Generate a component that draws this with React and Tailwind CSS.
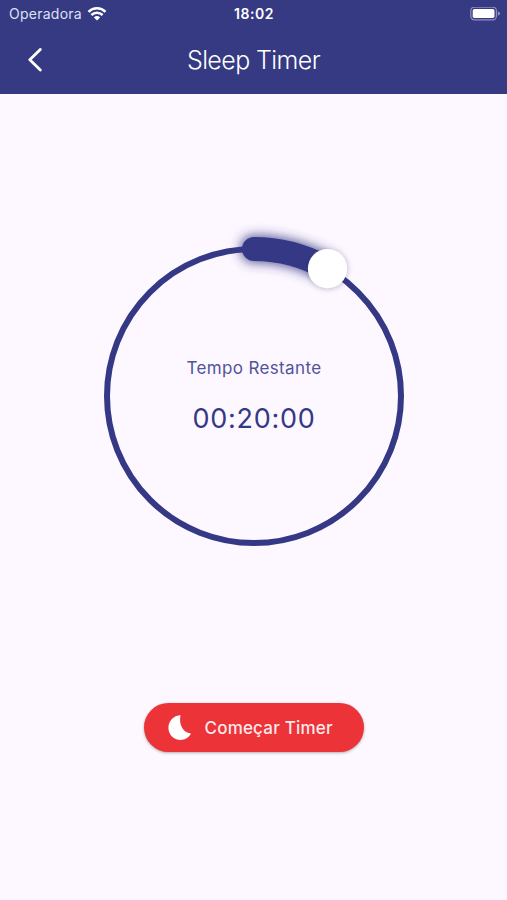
import React from "react";

const SIZE = 340;
const CENTER = SIZE / 2;
const RADIUS = 147;

function pointAt(degrees) {
  const rad = (degrees * Math.PI) / 180;
  return {
    x: CENTER + RADIUS * Math.sin(rad),
    y: CENTER - RADIUS * Math.cos(rad),
  };
}

function WifiIcon() {
  return (
    <svg width="20" height="14" viewBox="0 0 20 14" fill="none">
      <g stroke="#fff" strokeWidth="2.5">
        <path d="M1.5 4.8a12.2 12.2 0 0 1 17 0" />
        <path d="M4.4 8a8 8 0 0 1 11.2 0" />
      </g>
      <path d="M10 13.4 6.9 10.4a4.4 4.4 0 0 1 6.2 0z" fill="#fff" />
    </svg>
  );
}

function BatteryIcon() {
  return (
    <svg width="31" height="14" viewBox="0 0 31 14" fill="none">
      <rect x="0.8" y="0.2" width="25.6" height="12.6" rx="3.6" stroke="#8f90bf" strokeWidth="1.2" />
      <rect x="2.7" y="2" width="21.8" height="9" rx="1.8" fill="#fff" />
      <path d="M27.8 4.3c1.5.5 2.2 1.2 2.2 2.2s-.7 1.7-2.2 2.2z" fill="#8f90bf" />
    </svg>
  );
}

function MoonIcon() {
  return (
    <svg width="24" height="26" viewBox="0 0 24 26" fill="#fff">
      <path d="M12.6.3C10.6 8.5 14.2 17.5 23 18.6 20.9 22.6 17 25 12.5 25 5.9 25 .4 19.5.4 12.7.4 6.2 5.6.5 12.6.3z" />
    </svg>
  );
}

function TimerDial({ label, time, degrees }) {
  const start = pointAt(0);
  const end = pointAt(degrees);
  const arc = `M${start.x} ${start.y}A${RADIUS} ${RADIUS} 0 0 1 ${end.x} ${end.y}`;

  return (
    <div className="grid place-items-center">
      <svg
        className="col-start-1 row-start-1 overflow-visible"
        width={SIZE}
        height={SIZE}
        viewBox={`0 0 ${SIZE} ${SIZE}`}
        fill="none"
      >
        <defs>
          <filter id="glow" filterUnits="userSpaceOnUse" x="-30" y="-30" width="400" height="400">
            <feGaussianBlur stdDeviation="5.5" />
          </filter>
          <filter id="knob" x="-50%" y="-50%" width="200%" height="200%">
            <feDropShadow dx="0" dy="0.5" stdDeviation="2" floodColor="#000" floodOpacity="0.18" />
          </filter>
        </defs>
        <circle cx={CENTER} cy={CENTER} r={RADIUS} stroke="#353985" strokeWidth="6" />
        <path d={arc} stroke="#353985" strokeOpacity="0.8" strokeWidth="28" strokeLinecap="round" filter="url(#glow)" />
        <path d={arc} stroke="#353985" strokeWidth="24" strokeLinecap="round" />
        <circle cx={end.x} cy={end.y} r="19.6" fill="#fff" filter="url(#knob)" />
      </svg>
      <div className="col-start-1 row-start-1 flex flex-col items-center text-[#353985]">
        <p className="pl-px text-[17px] leading-6 tracking-[0.35px] text-[#50549a]">{label}</p>
        <p className="mt-[21px] pl-px text-[27px] leading-9 tracking-[0.75px]">{time}</p>
      </div>
    </div>
  );
}

export default function App() {
  return (
    <div className="flex h-[900px] w-[507px] flex-col overflow-hidden bg-[#fdf7ff] font-['Inter',sans-serif]">
      <header className="h-[93.5px] shrink-0 bg-[#353a83] text-white">
        <div className="grid h-[27px] grid-cols-3 items-center pl-[9px] pr-[6px]">
          <div className="flex items-center gap-[5px] text-[14px] text-[#dfe0f3]">
            <span className="tracking-[0.25px]">Operadora</span>
            <WifiIcon />
          </div>
          <span className="pr-[2px] text-center text-[14px] font-semibold tracking-[0.5px]">18:02</span>
          <div className="flex justify-end">
            <BatteryIcon />
          </div>
        </div>
        <div className="grid h-[67px] grid-cols-[60px_1fr_60px] items-center">
          <button aria-label="Voltar" className="pl-[27px]">
            <svg width="16" height="26" viewBox="0 0 16 26" fill="none">
              <path d="M13.3 1.4 2.8 11.7l10.5 10.3" stroke="#fff" strokeWidth="2.8" strokeLinecap="round" strokeLinejoin="round" />
            </svg>
          </button>
          <h1 className="text-center text-[25px] font-light tracking-[-0.6px]">Sleep Timer</h1>
        </div>
      </header>

      <main className="flex flex-1 flex-col items-center pt-[132.5px]">
        <TimerDial label="Tempo Restante" time="00:20:00" degrees={30} />
        <button className="mt-[137px] flex h-[49px] w-[220px] items-center gap-[13px] rounded-full bg-[#eb3338] pl-6 text-white shadow-[0_1px_3px_rgba(0,0,0,0.3)]">
          <MoonIcon />
          <span className="pt-0.5 text-[17px] font-medium tracking-[0.2px] text-[#ffe9ec]">Começar Timer</span>
        </button>
      </main>
    </div>
  );
}
